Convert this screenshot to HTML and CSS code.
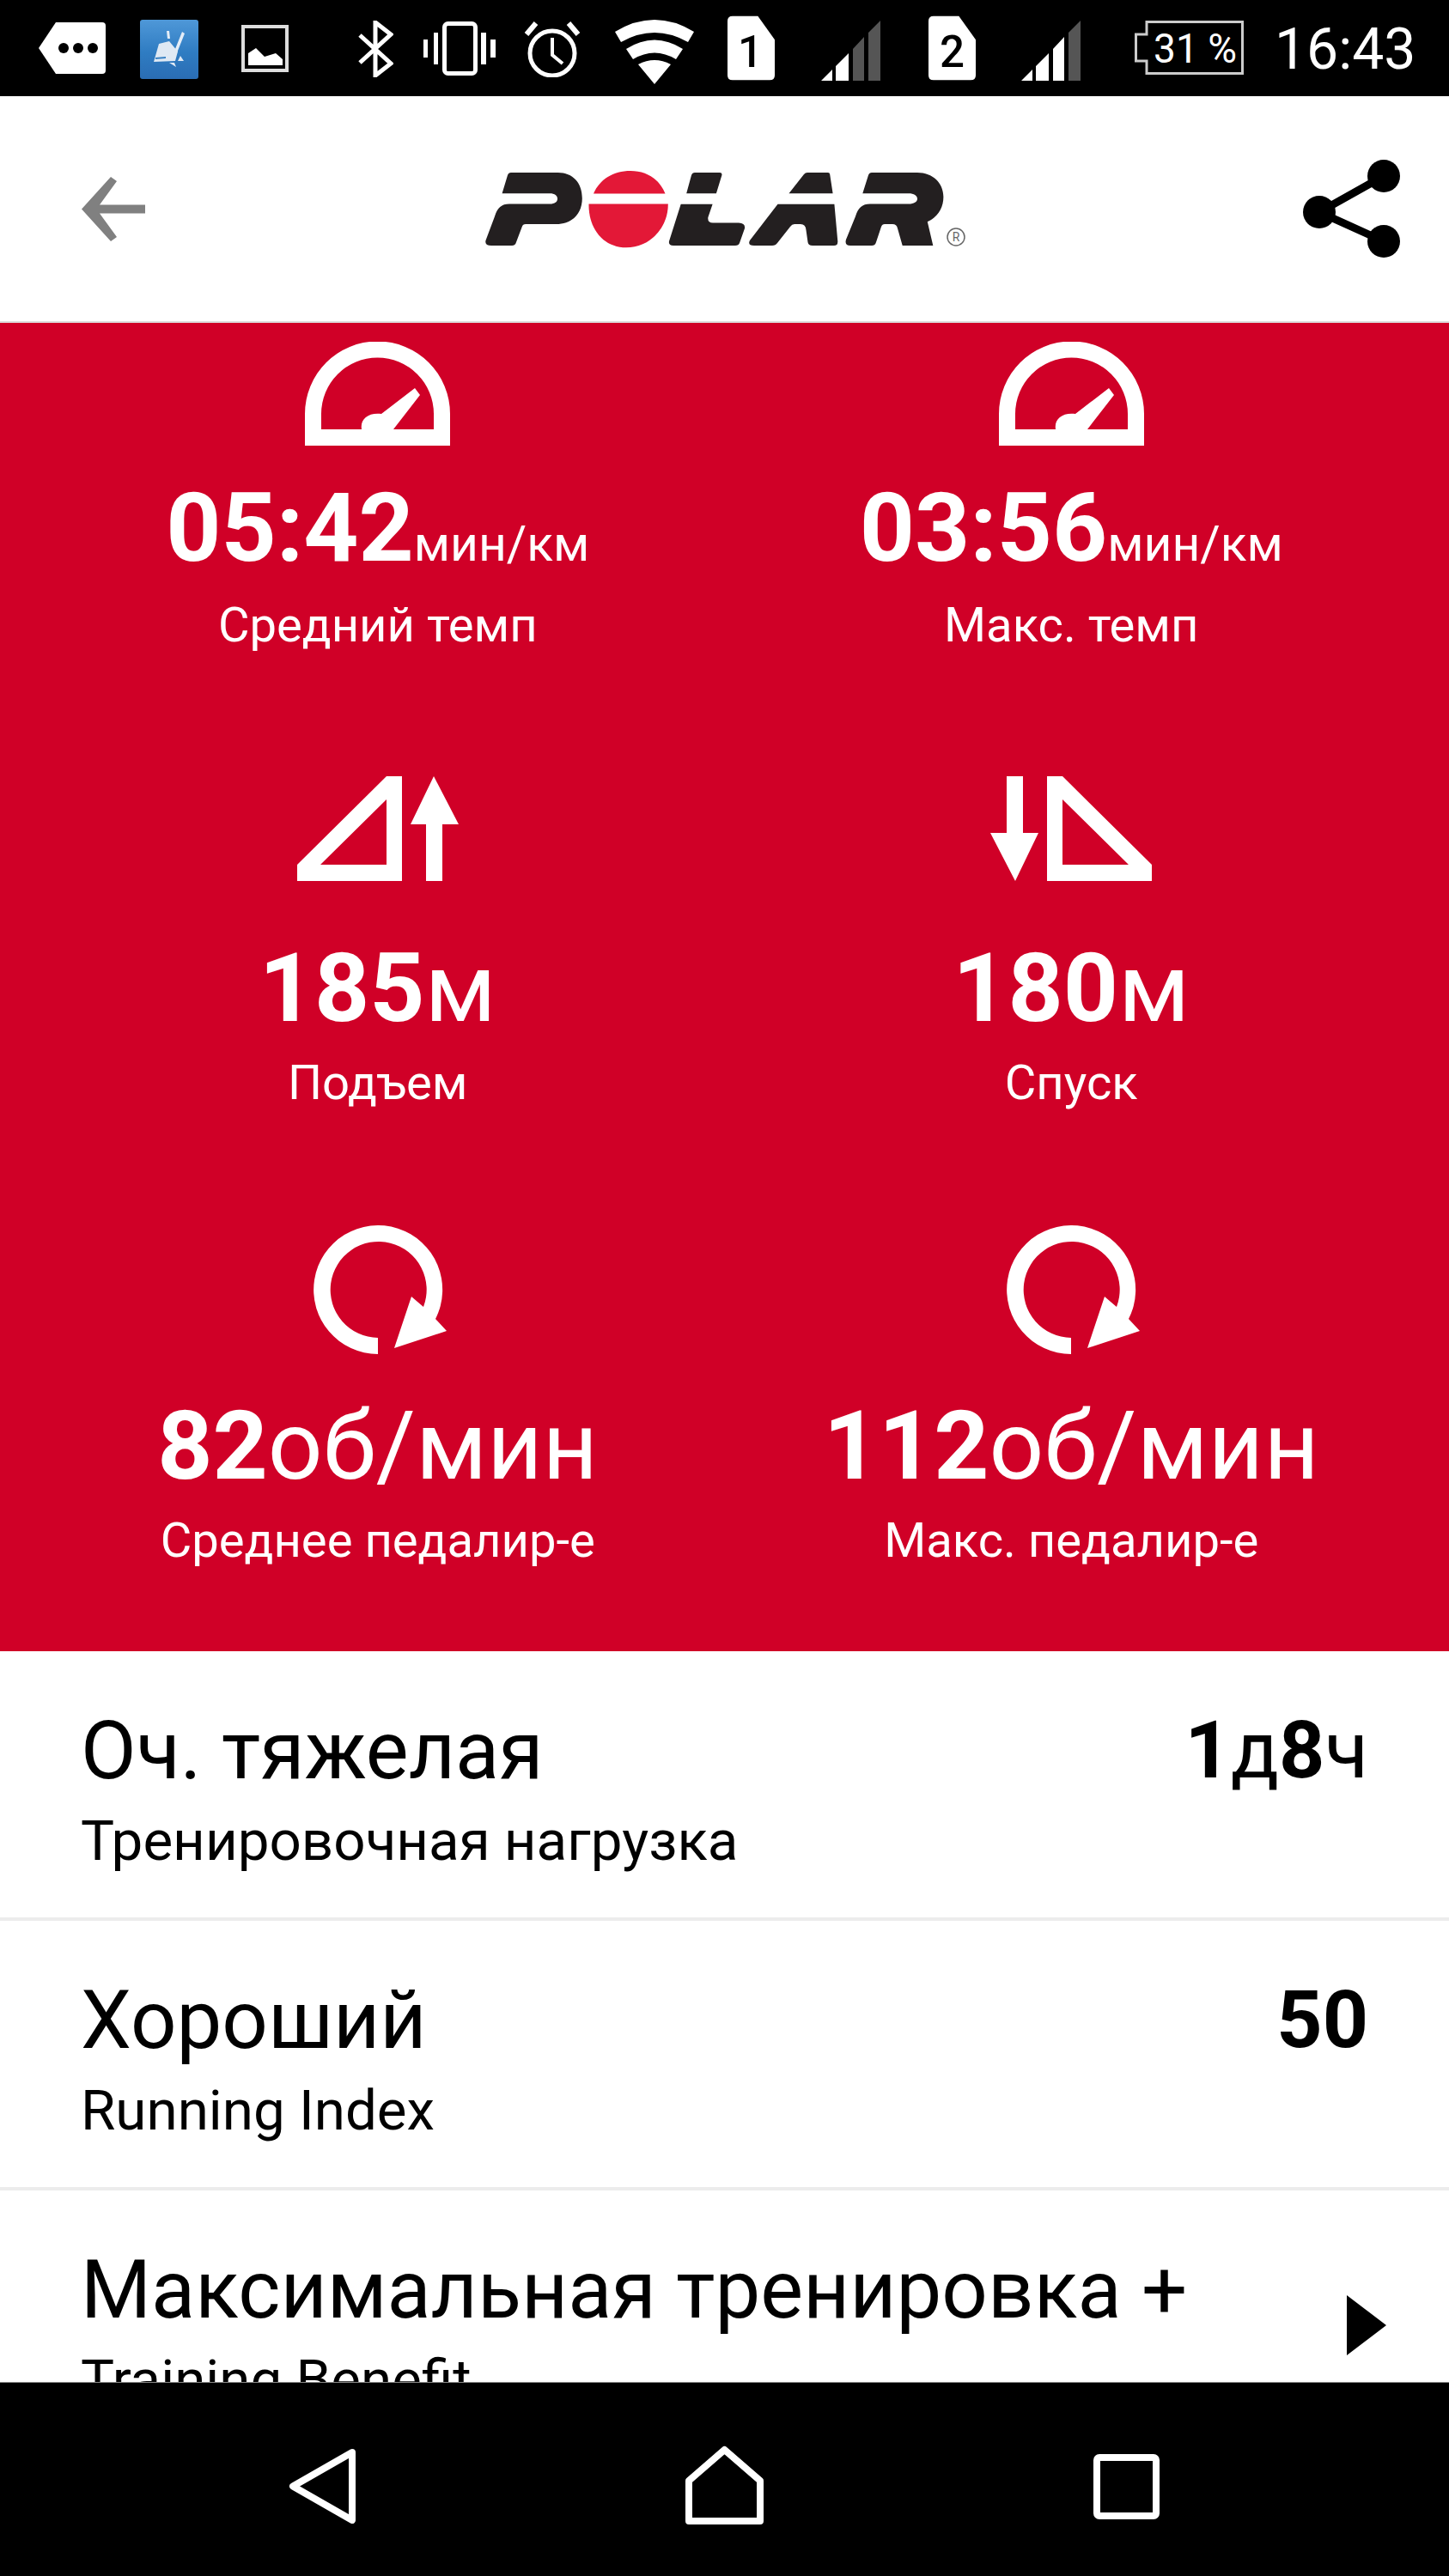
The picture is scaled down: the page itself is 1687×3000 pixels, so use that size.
FILE: index.html
```html
<!DOCTYPE html>
<html>
<head>
<meta charset="utf-8">
<title>Polar</title>
<link rel="stylesheet" href="styles.css">
</head>
<body>
<div class="status">
  <svg class="st-tag" viewBox="0 0 78 60"><path d="M20 0H74Q78 0 78 4V56Q78 60 74 60H20L0 30Z" fill="#fff"/><circle cx="29" cy="30" r="6"/><circle cx="46" cy="30" r="6"/><circle cx="63" cy="30" r="6"/></svg>
  <svg class="st-app" viewBox="0 0 68 69"><defs><linearGradient id="appBlue" x1="0" y1="0" x2="0" y2="1"><stop offset="0" stop-color="#4f98d8"/><stop offset="0.55" stop-color="#2f7cc2"/><stop offset="1" stop-color="#2a6db4"/></linearGradient></defs><rect width="68" height="69" rx="3" fill="url(#appBlue)"/><path d="M31 13L34 13L35 22L32 22ZM49 14L52 16L42 41L39 39Z" fill="#e4edf7"/><path d="M22 28L34 25L44 37L41 48L16 49ZM44 48L47 42L51 48ZM34 50L40 50L42 55Z" fill="#dfe9f4"/><path d="M18 44L30 43V45L18 46Z" fill="#3a82c4"/></svg>
  <svg class="st-pic" viewBox="0 0 55 55"><rect x="2" y="2" width="51" height="51" fill="none" stroke="#ddd" stroke-width="4"/><path d="M8 47V33L17 27L27 37L40 33L48 40V47Z" fill="#fff"/></svg>
  <svg class="st-bt" viewBox="0 0 42 66"><path d="M3 17L39 50L21 64V2L39 16L3 49" fill="none" stroke="#fff" stroke-width="5"/></svg>
  <svg class="st-vib" viewBox="0 0 84 63"><rect x="24.500" y="2.500" width="36" height="58" rx="4" fill="none" stroke="#fff" stroke-width="5"/><path d="M0 21H5V42H0ZM12 13H17V50H12ZM67 13H73V50H67ZM78 21H84V42H78Z" fill="#fff"/></svg>
  <svg class="st-alarm" viewBox="0 0 66 66"><circle cx="33" cy="38" r="26" fill="none" stroke="#fff" stroke-width="5"/><path d="M33 20V40L45 50" fill="none" stroke="#fff" stroke-width="4"/><path d="M3 16L14 3M63 16L52 3" fill="none" stroke="#fff" stroke-width="6"/></svg>
  <svg class="st-wifi" viewBox="0 0 92 75"><path d="M0 14Q46 -14 92 14L85 26Q46 4 7 26ZM13 34Q46 13 79 34L71 46Q46 31 21 46ZM27 52Q46 42 65 52L46 75Z" fill="#fff"/></svg>
  <svg class="st-sim" viewBox="0 0 56 76"><path d="M6 0H36L56 28V70Q56 76 50 76H6Q0 76 0 70V6Q0 0 6 0Z" fill="#fff"/><text x="27" y="60" class="sim-num">1</text></svg>
  <svg class="st-signal" viewBox="0 0 69 70"><path d="M0 70L13 57V70ZM17 70V53L32 38V70Z" fill="#fff"/><path d="M37 70V33L50 19V70ZM55 70V14L69 0V70Z" fill="#555"/></svg>
  <svg class="st-sim st-sim2" viewBox="0 0 56 76"><path d="M6 0H36L56 28V70Q56 76 50 76H6Q0 76 0 70V6Q0 0 6 0Z" fill="#fff"/><text x="28" y="60" class="sim-num">2</text></svg>
  <svg class="st-signal st-signal2" viewBox="0 0 69 70"><path d="M0 70L13 57V70ZM17 70V53L32 38V70ZM37 70V33L50 19V70Z" fill="#fff"/><path d="M55 70V14L69 0V70Z" fill="#555"/></svg>
  <svg class="st-batt" viewBox="0 0 127 63"><path d="M14 1.500H125.500V61.500H14V47H1.500V16H14Z" fill="none" stroke="#ccc" stroke-width="3"/><text x="22" y="49" class="batt-num" textLength="97" lengthAdjust="spacingAndGlyphs">31 %</text></svg>
  <span class="st-time">16:43</span>
</div>

<div class="header">
  <svg class="back" viewBox="0 0 74 75"><path d="M74 32.500H21L41 5L34 0L0 37.500L34 75L41 70L21 42.500H74Z" fill="#808080"/></svg>
  <svg class="logo" viewBox="60 35 570 95">
    <g fill="#231f20">
      <path d="M84.600 64.300L91 43Q92 40 95 40H149.600C167 40 177.800 52 177.800 70C177.800 88 166 100 147.400 100H112Q108.600 100 107.800 103L101 121Q100 125 96 125H72Q64 125 65.500 119L76 91C79 81 84 76.500 93 76.500H140C146 76.500 149 74 149 70.500C149 67 146 64.300 140 64.300Z"/>
      <path d="M299.200 64.300L305 43Q306 40 309 40H338Q341 40 340.400 43L333.900 64.300ZM292.700 76.700H329.600L324.400 92Q323.500 98.500 330 98.500H360Q368 99 367 105L361 122Q360 125 356 125H284Q278 125 279 120Z"/>
      <path d="M418.500 64.300L436 42Q437.500 40 440 40H464Q466 40 466.200 42L469.600 64.300ZM405.500 76.700H471.400L475.300 120Q475.500 125 471 125H446Q441 125 440.500 121L438.500 107Q438 100 432 100H425Q422 100 420 103L405 122Q403 125 399 125H378Q370 125 373 119Z"/>
      <path d="M504.300 64.300L511 43Q512 40 515 40H568C586 40 598.400 52 598.400 68.300C598.400 81 592 92 579.800 97.300L586.300 125H550.700L545 105Q544 100 539 100H530Q527 100 526 103L520 121Q519 125 515 125H490Q483 125 485 118L496 91C499 81 504 76.500 513 76.500H558C564 76.500 568 74 568 70.500C568 67 564 64.300 558 64.300Z"/>
    </g>
    <g fill="#e31837">
      <path d="M191 64.500C198 48 214 38 234 38C253 38 268 48 274.500 64.500Z"/>
      <path d="M185.500 76.500H277.800C278 105 256 127.300 229 127.300C203 127.300 185 106 185.500 76.500Z"/>
    </g>
    <circle cx="613" cy="115" r="10" fill="none" stroke="#666" stroke-width="1.500"/>
    <text x="613" y="120" class="logo-r">R</text>
  </svg>
  <svg class="share" viewBox="0 0 113 114"><path d="M94 19L19 61L94 95" fill="none" stroke="#000" stroke-width="9"/><circle cx="94" cy="19" r="19"/><circle cx="19" cy="61" r="19"/><circle cx="94" cy="95" r="19"/></svg>
</div>

<div class="stats">
  <div class="stat">
    <svg class="ic-gauge" viewBox="0 0 169 121"><path fill-rule="evenodd" d="M0 121V84A84.500 84.500 0 0 1 169 84V121ZM19 102H66C64 90 74 82 89 84L128 54L134 62L103 102H150V84A65.500 65.500 0 0 0 19 84Z" fill="#fff"/></svg>
    <div class="value value-pace">05:42<span class="unit-sm">мин/км</span></div>
    <div class="label">Средний темп</div>
  </div>
  <div class="stat">
    <svg class="ic-gauge" viewBox="0 0 169 121"><path fill-rule="evenodd" d="M0 121V84A84.500 84.500 0 0 1 169 84V121ZM19 102H66C64 90 74 82 89 84L128 54L134 62L103 102H150V84A65.500 65.500 0 0 0 19 84Z" fill="#fff"/></svg>
    <div class="value value-pace">03:56<span class="unit-sm">мин/км</span></div>
    <div class="label">Макс. темп</div>
  </div>
  <div class="stat">
    <svg class="ic-climb" viewBox="0 0 188 122"><path fill-rule="evenodd" d="M0 122V103L104 0H122V122ZM27 103H104V27Z" fill="#fff"/><path d="M159 0L188 56H169V122H150V56H132Z" fill="#fff"/></svg>
    <div class="value">185<span class="unit">м</span></div>
    <div class="label">Подъем</div>
  </div>
  <div class="stat">
    <svg class="ic-climb" viewBox="0 0 188 122"><path fill-rule="evenodd" d="M188 122V103L84 0H66V122ZM161 103H84V27Z" fill="#fff"/><path d="M29 122L0 66H19V0H38V66H56Z" fill="#fff"/></svg>
    <div class="value">180<span class="unit">м</span></div>
    <div class="label">Спуск</div>
  </div>
  <div class="stat">
    <svg class="ic-turn" viewBox="0 0 155 150"><path d="M75 150A75 75 0 1 1 142 109L155 123L94 143L114 83L128 95A56 56 0 1 0 75 131Z" fill="#fff"/></svg>
    <div class="value">82<span class="unit">об/мин</span></div>
    <div class="label">Среднее педалир-е</div>
  </div>
  <div class="stat">
    <svg class="ic-turn" viewBox="0 0 155 150"><path d="M75 150A75 75 0 1 1 142 109L155 123L94 143L114 83L128 95A56 56 0 1 0 75 131Z" fill="#fff"/></svg>
    <div class="value">112<span class="unit">об/мин</span></div>
    <div class="label">Макс. педалир-е</div>
  </div>
</div>

<div class="list">
  <div class="row">
    <div>
      <div class="row-title">Оч. тяжелая</div>
      <div class="row-sub">Тренировочная нагрузка</div>
    </div>
    <div class="row-value">1<span class="row-unit">д</span>8<span class="row-unit">ч</span></div>
  </div>
  <div class="row">
    <div>
      <div class="row-title">Хороший</div>
      <div class="row-sub">Running Index</div>
    </div>
    <div class="row-value">50</div>
  </div>
  <div class="row row-last">
    <div>
      <div class="row-title">Максимальная тренировка +</div>
      <div class="row-sub">Training Benefit</div>
    </div>
    <svg class="more" viewBox="0 0 46 70"><path d="M0 0L46 35L0 70Z"/></svg>
  </div>
</div>

<div class="nav">
  <svg class="nav-back" viewBox="0 0 78 87"><path d="M74 4L5 43.500L74 83Z" fill="none" stroke="#fff" stroke-width="8" stroke-linejoin="round"/></svg>
  <svg class="nav-home" viewBox="0 0 91 92"><path d="M45.500 5L4 41V88H87V41Z" fill="none" stroke="#fff" stroke-width="8" stroke-linejoin="round"/></svg>
  <svg class="nav-recent" viewBox="0 0 77 76"><rect x="4" y="4" width="69" height="68" rx="3" fill="none" stroke="#fff" stroke-width="8"/></svg>
</div>
</body>
</html>
```

FILE: styles.css
```css
* {
  box-sizing: border-box;
}
html,
body {
  margin: 0;
  height: 3000px;
  overflow: hidden;
}
body {
  display: flex;
  flex-direction: column;
  background: #fff;
  font-family: Roboto, "Liberation Sans", sans-serif;
  color: #000;
}
svg {
  display: block;
  flex: none;
}

/* status bar */
.status {
  height: 112px;
  flex: none;
  background: #000;
  display: flex;
  align-items: center;
  padding-left: 45px;
}
.st-tag { width: 78px; height: 60px; }
.st-app { width: 68px; height: 69px; margin-left: 40px; margin-top: 3px; }
.st-pic { width: 55px; height: 55px; margin-left: 50px; }
.st-bt { width: 42px; height: 66px; margin-left: 80px; margin-top: 2px; }
.st-vib { width: 84px; height: 63px; margin-left: 35px; margin-top: 1px; }
.st-alarm { width: 66px; height: 66px; margin-left: 33px; margin-top: 2px; }
.st-wifi { width: 92px; height: 75px; margin-left: 40px; margin-top: 9px; }
.st-sim { width: 55px; height: 76px; margin-left: 39px; }
.st-sim2 { margin-left: 56px; }
.st-signal { width: 69px; height: 70px; margin-left: 54px; margin-top: 6px; }
.st-signal2 { margin-left: 53px; }
.st-batt { width: 127px; height: 63px; margin-left: 63px; margin-top: -1px; }
.st-time {
  margin-left: 36px;
  margin-top: 4px;
  color: #fff;
  font-size: 66px;
  line-height: 70px;
}
.sim-num {
  font-family: Roboto, sans-serif;
  font-size: 52px;
  font-weight: 500;
  text-anchor: middle;
  fill: #000;
}
.batt-num {
  font-family: Roboto, sans-serif;
  font-size: 48px;
  fill: #fff;
}

/* header */
.header {
  height: 264px;
  flex: none;
  display: flex;
  align-items: center;
  justify-content: space-between;
  padding: 0 57px 0 95px;
  border-bottom: 2px solid #ddd;
}
.back { width: 74px; height: 75px; }
.logo { width: 570px; height: 95px; margin-left: 3px; }
.share { width: 113px; height: 114px; }
.logo-r {
  font-family: Roboto, sans-serif;
  font-size: 14px;
  text-anchor: middle;
  fill: #666;
}

/* red stats */
.stats {
  height: 1547px;
  flex: none;
  background: #d00027;
  color: #fff;
  padding: 0 36px;
  display: grid;
  grid-template-columns: 1fr 1fr;
  grid-template-rows: 481px 533px 533px;
}
.stat {
  display: flex;
  flex-direction: column;
  align-items: center;
  justify-content: flex-end;
}
.ic-gauge { width: 169px; height: 121px; margin-bottom: 36px; }
.ic-climb { width: 188px; height: 122px; margin-bottom: 65px; }
.ic-turn { width: 155px; height: 150px; margin-bottom: 47px; margin-left: 5px; }
.value {
  font-size: 112px;
  font-weight: 700;
  line-height: 120px;
  margin-bottom: 20px;
  white-space: nowrap;
}
.value-pace {
  margin-bottom: 23px;
}
.unit {
  font-weight: 400;
}
.unit-sm {
  font-size: 57px;
  font-weight: 400;
  line-height: 1;
}
.label {
  font-size: 56.2px;
  line-height: 60px;
  margin-bottom: 99px;
}

/* list below */
.list {
  flex: 1;
  overflow: hidden;
  min-height: 0;
}
.row {
  height: 314px;
  display: flex;
  justify-content: space-between;
  padding: 66px 94px 0;
  border-bottom: 4px solid #ececec;
}
.row-last {
  border-bottom: 0;
  padding-right: 73px;
}
.row-title {
  font-size: 94px;
  line-height: 100px;
}
.row-sub {
  font-size: 65.5px;
  line-height: 70px;
  margin-top: 20px;
}
.row-value {
  font-size: 93px;
  font-weight: 700;
  line-height: 100px;
}
.row-unit {
  font-weight: 400;
}
.more {
  width: 46px;
  height: 70px;
  margin-top: 56px;
}

/* nav bar */
.nav {
  height: 226px;
  flex: none;
  background: #000;
  border-top: 1px solid #888;
  display: grid;
  grid-template-columns: repeat(3, 1fr);
  padding: 16px 141px 0;
  align-items: center;
  justify-items: center;
}
.nav-back { width: 78px; height: 87px; }
.nav-home { width: 91px; height: 92px; margin-top: -4px; }
.nav-recent { width: 77px; height: 76px; }
```
